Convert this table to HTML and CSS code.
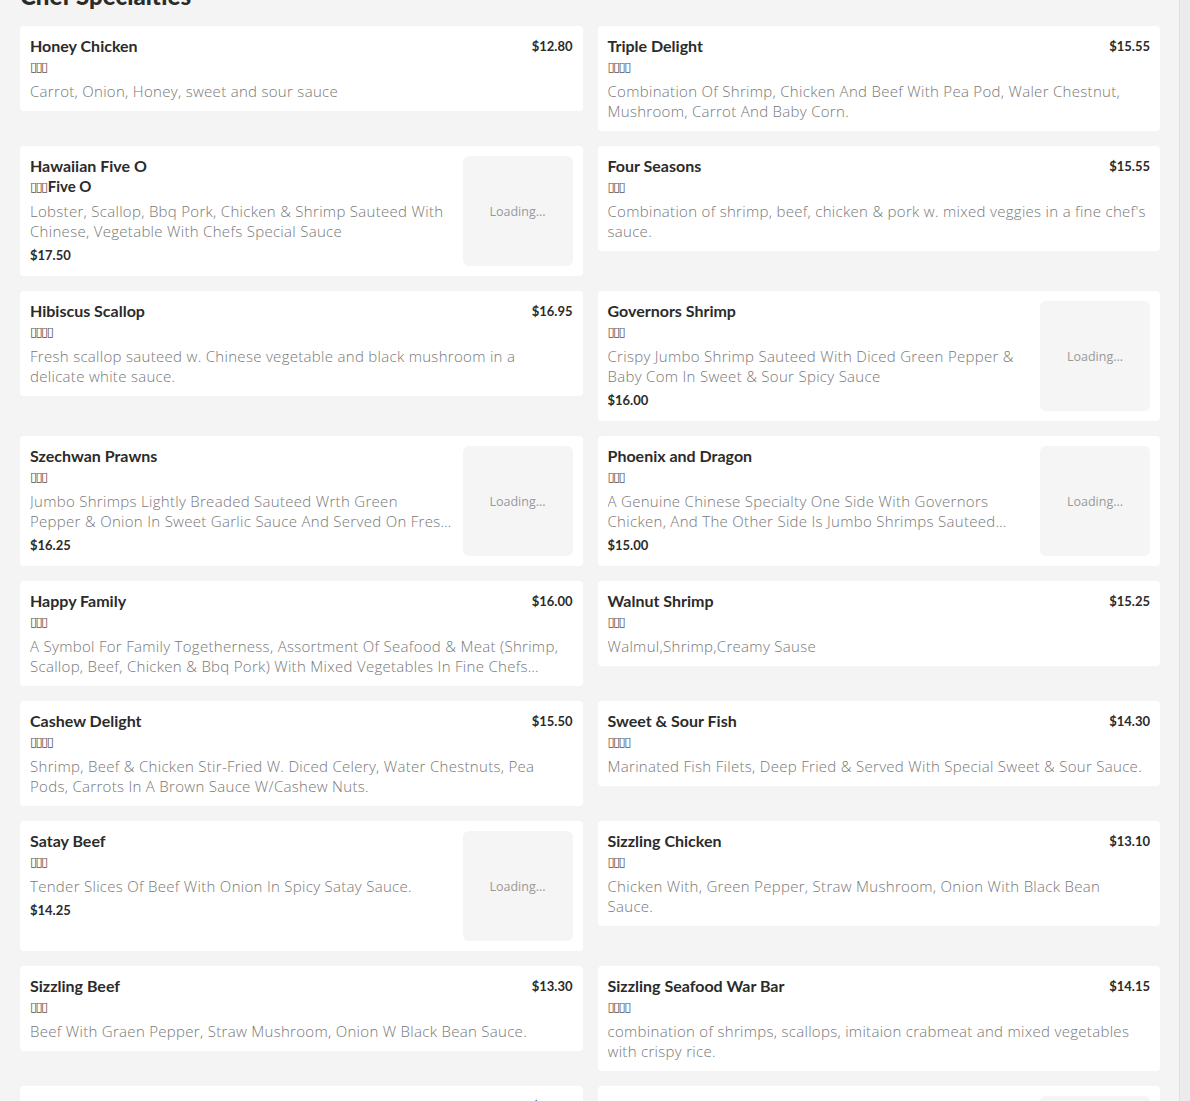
FILE: index.html
```html
<!DOCTYPE html>
<html lang="en">
<head>
    <meta charset="UTF-8">
    <meta name="viewport" content="width=device-width, initial-scale=1.0">
    <title>Chef Specialties</title>
    <link rel="stylesheet" href="styles.css">
</head>
<body>

    <div class="menu-section">
        <h2 class="section-title">Chef Specialties</h2>

        <div class="menu-grid">
            <div class="card">
                <div class="card-info">
                    <div class="card-head"><h3>Honey Chicken</h3><span class="price">$12.80</span></div>
                    <div class="cn"><span class="tofu">▯▯▯</span></div>
                    <p class="desc">Carrot, Onion, Honey, sweet and sour sauce</p>
                </div>
            </div>

            <div class="card">
                <div class="card-info">
                    <div class="card-head"><h3>Triple Delight</h3><span class="price">$15.55</span></div>
                    <div class="cn"><span class="tofu">▯▯▯▯</span></div>
                    <p class="desc">Combination Of Shrimp, Chicken And Beef With Pea Pod, Waler Chestnut, Mushroom, Carrot And Baby Corn.</p>
                </div>
            </div>

            <div class="card">
                <div class="card-info">
                    <h3>Hawaiian Five O</h3>
                    <div class="cn"><span class="tofu">▯▯▯</span>Five O</div>
                    <p class="desc">Lobster, Scallop, Bbq Pork, Chicken &amp; Shrimp Sauteed With Chinese, Vegetable With Chefs Special Sauce</p>
                    <div class="price">$17.50</div>
                </div>
                <div class="thumb">Loading...</div>
            </div>

            <div class="card">
                <div class="card-info">
                    <div class="card-head"><h3>Four Seasons</h3><span class="price">$15.55</span></div>
                    <div class="cn"><span class="tofu">▯▯▯</span></div>
                    <p class="desc">Combination of shrimp, beef, chicken &amp; pork w. mixed veggies in a fine chef's sauce.</p>
                </div>
            </div>

            <div class="card">
                <div class="card-info">
                    <div class="card-head"><h3>Hibiscus Scallop</h3><span class="price">$16.95</span></div>
                    <div class="cn"><span class="tofu">▯▯▯▯</span></div>
                    <p class="desc">Fresh scallop sauteed w. Chinese vegetable and black mushroom in a delicate white sauce.</p>
                </div>
            </div>

            <div class="card">
                <div class="card-info">
                    <h3>Governors Shrimp</h3>
                    <div class="cn"><span class="tofu">▯▯▯</span></div>
                    <p class="desc">Crispy Jumbo Shrimp Sauteed With Diced Green Pepper &amp; Baby Com In Sweet &amp; Sour Spicy Sauce</p>
                    <div class="price">$16.00</div>
                </div>
                <div class="thumb">Loading...</div>
            </div>

            <div class="card">
                <div class="card-info">
                    <h3>Szechwan Prawns</h3>
                    <div class="cn"><span class="tofu">▯▯▯</span></div>
                    <p class="desc">Jumbo Shrimps Lightly Breaded Sauteed Wrth Green Pepper &amp; Onion In Sweet Garlic Sauce And Served On Fresh Broccoli.</p>
                    <div class="price">$16.25</div>
                </div>
                <div class="thumb">Loading...</div>
            </div>

            <div class="card">
                <div class="card-info">
                    <h3>Phoenix and Dragon</h3>
                    <div class="cn"><span class="tofu">▯▯▯</span></div>
                    <p class="desc">A Genuine Chinese Specialty One Side With Governors Chicken, And The Other Side Is Jumbo Shrimps Sauteed With Vegetables.</p>
                    <div class="price">$15.00</div>
                </div>
                <div class="thumb">Loading...</div>
            </div>

            <div class="card">
                <div class="card-info">
                    <div class="card-head"><h3>Happy Family</h3><span class="price">$16.00</span></div>
                    <div class="cn"><span class="tofu">▯▯▯</span></div>
                    <p class="desc">A Symbol For Family Togetherness, Assortment Of Seafood &amp; Meat (Shrimp, Scallop, Beef, Chicken &amp; Bbq Pork) With Mixed Vegetables In Fine Chefs Special Sauce.</p>
                </div>
            </div>

            <div class="card">
                <div class="card-info">
                    <div class="card-head"><h3>Walnut Shrimp</h3><span class="price">$15.25</span></div>
                    <div class="cn"><span class="tofu">▯▯▯</span></div>
                    <p class="desc">Walmul,Shrimp,Creamy Sause</p>
                </div>
            </div>

            <div class="card">
                <div class="card-info">
                    <div class="card-head"><h3>Cashew Delight</h3><span class="price">$15.50</span></div>
                    <div class="cn"><span class="tofu">▯▯▯▯</span></div>
                    <p class="desc">Shrimp, Beef &amp; Chicken Stir-Fried W. Diced Celery, Water Chestnuts, Pea Pods, Carrots In A Brown Sauce W/Cashew Nuts.</p>
                </div>
            </div>

            <div class="card">
                <div class="card-info">
                    <div class="card-head"><h3>Sweet &amp; Sour Fish</h3><span class="price">$14.30</span></div>
                    <div class="cn"><span class="tofu">▯▯▯▯</span></div>
                    <p class="desc">Marinated Fish Filets, Deep Fried &amp; Served With Special Sweet &amp; Sour Sauce.</p>
                </div>
            </div>

            <div class="card">
                <div class="card-info">
                    <h3>Satay Beef</h3>
                    <div class="cn"><span class="tofu">▯▯▯</span></div>
                    <p class="desc">Tender Slices Of Beef With Onion In Spicy Satay Sauce.</p>
                    <div class="price">$14.25</div>
                </div>
                <div class="thumb">Loading...</div>
            </div>

            <div class="card">
                <div class="card-info">
                    <div class="card-head"><h3>Sizzling Chicken</h3><span class="price">$13.10</span></div>
                    <div class="cn"><span class="tofu">▯▯▯</span></div>
                    <p class="desc">Chicken With, Green Pepper, Straw Mushroom, Onion With Black Bean Sauce.</p>
                </div>
            </div>

            <div class="card">
                <div class="card-info">
                    <div class="card-head"><h3>Sizzling Beef</h3><span class="price">$13.30</span></div>
                    <div class="cn"><span class="tofu">▯▯▯</span></div>
                    <p class="desc">Beef With Graen Pepper, Straw Mushroom, Onion W Black Bean Sauce.</p>
                </div>
            </div>

            <div class="card">
                <div class="card-info">
                    <div class="card-head"><h3>Sizzling Seafood War Bar</h3><span class="price">$14.15</span></div>
                    <div class="cn"><span class="tofu">▯▯▯▯</span></div>
                    <p class="desc">combination of shrimps, scallops, imitaion crabmeat and mixed vegetables with crispy rice.</p>
                </div>
            </div>

            <div class="card">
                <div class="card-info">
                    <div class="card-head"><h3>Sweet &amp; Sour Delight</h3><span class="price">$12.55</span></div>
                    <div class="cn"><span class="tofu">▯▯▯▯</span></div>
                    <p class="desc">Shrimp, Chicken &amp; Pork Deep Fried With Sweet &amp; Sour Sauce.</p>
                </div>
            </div>

            <div class="card">
                <div class="card-info">
                    <h3>Governors Chicken</h3>
                    <div class="cn"><span class="tofu">▯▯▯</span></div>
                    <p class="desc">Crispy Chunks Of Chicken Sauteed In Spicy Sauce.</p>
                    <div class="price">$13.25</div>
                </div>
                <div class="thumb">Loading...</div>
            </div>
        </div>
    </div>

</body>
</html>
```

FILE: styles.css
```css
html {
    background-color: #ebebeb;
}
body {
    margin: 0 10px 0 0;
    min-height: 100vh;
    background-color: #f4f4f4;
    border-right: 1px solid #e0e0e0;
    color: #333;
    font-family: "Lato", "Open Sans", sans-serif;
}
.menu-section {
    padding: 0 19px 40px 20px;
}
.section-title {
    margin: -19px 0 0;
    height: 45px;
    font-size: 24px;
    line-height: 30px;
    font-weight: 900;
    color: #2b2b2b;
}
.menu-grid {
    display: grid;
    grid-template-columns: 1fr 1fr;
    gap: 15px;
    align-items: start;
}
.card {
    display: flex;
    gap: 10px;
    background: #ffffff;
    border-radius: 4px;
    padding: 10px;
}
.card-info {
    flex: 1;
    min-width: 0;
}
.card-head {
    display: flex;
    justify-content: space-between;
    align-items: center;
    height: 20px;
}
.card h3 {
    margin: 0;
    font-size: 16px;
    line-height: 20px;
    font-weight: 700;
    color: #2b2b2b;
}
.cn {
    height: 20px;
    font-size: 15px;
    line-height: 20px;
    font-weight: 700;
    color: #2b2b2b;
}
.tofu {
    font-family: "DejaVu Sans", sans-serif;
    font-size: 13px;
    font-weight: 400;
    color: #555;
    letter-spacing: -1.6px;
    vertical-align: 1px;
    margin-right: 1px;
}
.desc {
    margin: 5px 0 0;
    font-family: "Open Sans", sans-serif;
    font-size: 15px;
    line-height: 20px;
    font-weight: 300;
    letter-spacing: 0.3px;
    color: #777;
    display: -webkit-box;
    -webkit-line-clamp: 2;
    -webkit-box-orient: vertical;
    overflow: hidden;
}
.price {
    font-size: 13px;
    line-height: 20px;
    font-weight: 700;
    color: #2b2b2b;
}
.card-info > .price {
    margin-top: 4px;
}
.thumb {
    flex: none;
    width: 110px;
    height: 110px;
    border-radius: 6px;
    background: #f5f5f5;
    display: flex;
    align-items: center;
    justify-content: center;
    font-family: "Open Sans", sans-serif;
    font-size: 12.5px;
    color: #999;
}
```
